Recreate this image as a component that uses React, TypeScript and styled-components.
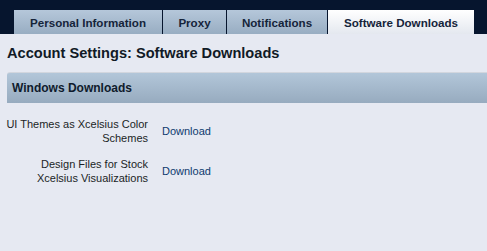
import { Fragment } from 'react';
import styled, { createGlobalStyle } from 'styled-components';

const GlobalStyle = createGlobalStyle`
  html, body {
    margin: 0;
    padding: 0;
    background: #e6e9f2;
    font-family: "Liberation Sans", Arial, sans-serif;
  }
`

const Page = styled.div`
  width: 487px;
  height: 251px;
  background: #e6e9f2;
  overflow: hidden;
`

const TabBar = styled.div`
  height: 34px;
  background: #06152e;
  display: flex;
  align-items: flex-end;
  padding-left: 14px;
  gap: 1px;
  box-sizing: border-box;
`

const Tab = styled.div<{ $active?: boolean; $w: number }>`
  width: ${(p) => p.$w}px;
  height: 24px;
  display: flex;
  align-items: center;
  justify-content: center;
  font-size: 11.6px;
  font-weight: bold;
  color: #15243a;
  background: ${(p) =>
    p.$active
      ? 'linear-gradient(#ffffff, #e4e8ef)'
      : 'linear-gradient(#b5c7da, #98adc2)'};
`

const Title = styled.h1`
  margin: 0;
  padding: 10px 7px 0;
  font-size: 14.6px;
  font-weight: bold;
  color: #111a26;
  line-height: 18px;
`

const SectionBar = styled.div`
  margin: 10px 0 0 7px;
  height: 30px;
  border-top: 1px solid #d2d6de;
  border-top-left-radius: 3px;
  background: linear-gradient(#b2c6d9, #97abbf);
  display: flex;
  align-items: center;
  padding-left: 5px;
  font-size: 12px;
  font-weight: bold;
  color: #0f1b2c;
`

const Table = styled.div`
  display: grid;
  grid-template-columns: 148px auto;
  column-gap: 14px;
  row-gap: 12px;
  padding-top: 14px;
  font-size: 11px;
  color: #1b1f26;
`

const Label = styled.div`
  display: flex;
  flex-direction: column;
  align-items: flex-end;
  line-height: 14px;
  white-space: nowrap;
`

const Link = styled.a`
  align-self: center;
  color: #0e3a6e;
  text-decoration: none;
  line-height: 14px;
`

const rows = [
  ['UI Themes as Xcelsius Color', 'Schemes'],
  ['Design Files for Stock', 'Xcelsius Visualizations'],
]

export default function App() {
  return (
    <Page>
      <GlobalStyle />
      <TabBar>
        <Tab $w={148}>Personal Information</Tab>
        <Tab $w={63}>Proxy</Tab>
        <Tab $w={100}>Notifications</Tab>
        <Tab $w={146} $active>Software Downloads</Tab>
      </TabBar>
      <Title>Account Settings: Software Downloads</Title>
      <SectionBar>Windows Downloads</SectionBar>
      <Table>
        {rows.map((lines) => (
          <Fragment key={lines[0]}>
            <Label>
              <span>{lines[0]}</span>
              <span>{lines[1]}</span>
            </Label>
            <Link href="#">Download</Link>
          </Fragment>
        ))}
      </Table>
    </Page>
  )
}
